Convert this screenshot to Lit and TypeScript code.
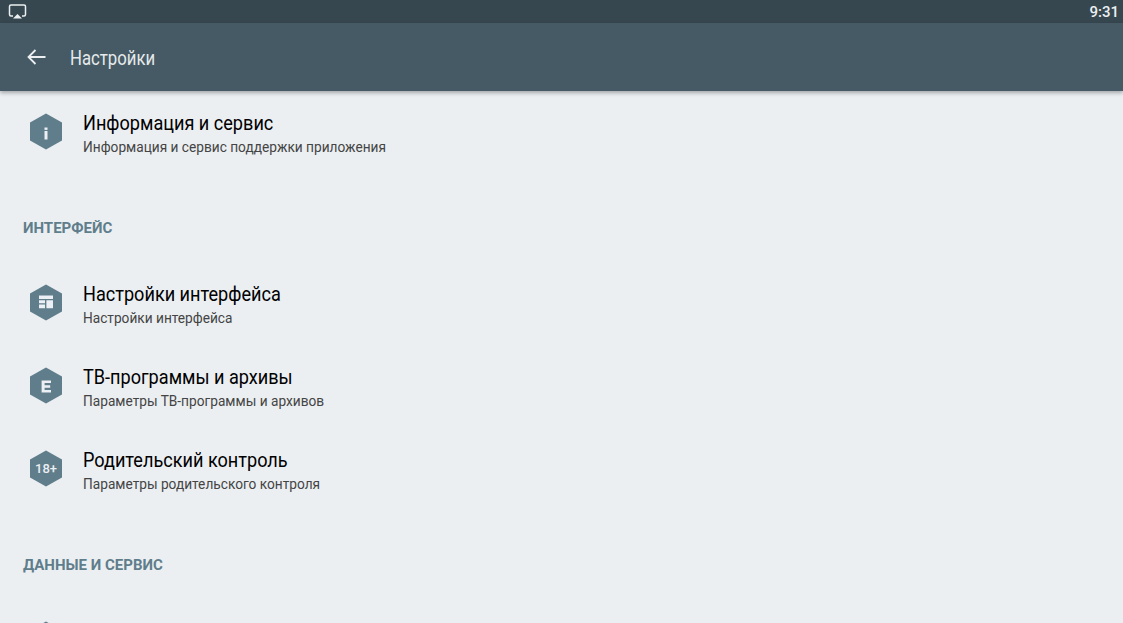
import { LitElement, html, css, svg } from "lit";
import { customElement } from "lit/decorators.js";

const HEX = "M18 0.5 L34 9.6 V27.4 L18 36.5 L2 27.4 V9.6 Z";

const glyphs: Record<string, unknown> = {
  info: svg`<rect x="16.5" y="14.5" width="3" height="2.4" fill="#eceff3"/><rect x="16.5" y="18" width="3" height="8.5" fill="#eceff3"/>`,
  layout: svg`<path d="M11 11.5h14v3.4H11zM11 16.2h6v3H11zM11 20.4h6v3.8H11zM18.4 16.2H25v8h-6.6z" fill="#eceff3"/>`,
  epg: svg`<path d="M13.6 13.5h9.4v2.6h-6.4v2.2h5.6v2.5h-5.6v2.2h6.4V25.5h-9.4z" fill="#eceff3"/>`,
  age: svg`<text x="18" y="23" text-anchor="middle" class="age">18+</text>`,
};

@customElement("app-root")
export class AppRoot extends LitElement {
  static styles = css`
    :host {
      display: block;
      height: 623px;
      overflow: hidden;
      background: #ebeff2;
      font-family: "Roboto", sans-serif;
    }
    .status {
      height: 23px;
      background: #37474f;
      display: flex;
      align-items: center;
      justify-content: space-between;
      padding: 0 4px 0 8px;
      color: #eceff1;
      font-size: 15px;
      font-weight: 500;
    }
    .status svg {
      display: block;
    }
    .toolbar {
      height: 68px;
      background: #455a64;
      display: flex;
      align-items: center;
      padding-left: 27px;
      gap: 24px;
      box-shadow: 0 2px 4px rgba(0, 0, 0, 0.3);
      position: relative;
    }
    .toolbar span {
      color: #e6eaec;
      font-size: 20px;
      display: inline-block;
      padding-top: 2px;
      transform: scaleX(0.837);
      transform-origin: left center;
    }
    .item {
      height: 83px;
      display: flex;
      padding-left: 28px;
      gap: 19px;
    }
    .item svg {
      flex: none;
      margin-top: 22px;
    }
    .age {
      font: 500 13px "Roboto", sans-serif;
      fill: #eceff3;
    }
    .text {
      padding-top: 19px;
      white-space: nowrap;
    }
    .title {
      font-size: 21px;
      line-height: 26px;
      color: #000;
      transform: scaleX(0.862);
      transform-origin: left top;
    }
    .sub {
      font-size: 15px;
      line-height: 18px;
      margin-top: 2px;
      color: #444;
      transform: scaleX(0.912);
      transform-origin: left top;
    }
    .section {
      padding: 44px 0 24px 23px;
      font-size: 15px;
      font-weight: 700;
      color: #607d8b;
      line-height: 20px;
    }
  `;

  private item(icon: string, title: string, sub: string) {
    return html`<div class="item">
      <svg width="36" height="37" viewBox="0 0 36 37">
        <path d=${HEX} fill="#607d8b"></path>${glyphs[icon]}
      </svg>
      <div class="text">
        <div class="title">${title}</div>
        <div class="sub">${sub}</div>
      </div>
    </div>`;
  }

  render() {
    return html`
      <div class="status">
        <svg width="19" height="15" viewBox="0 0 19 15">
          <path d="M5 12H3a1.5 1.5 0 0 1-1.5-1.5V2.5A1.5 1.5 0 0 1 3 1h13a1.5 1.5 0 0 1 1.5 1.5v8A1.5 1.5 0 0 1 16 12h-2" fill="none" stroke="#eceff1" stroke-width="1.5"></path>
          <path d="M5 14.5L9.5 10l4.5 4.5z" fill="#eceff1"></path>
        </svg>
        <span>9:31</span>
      </div>
      <div class="toolbar">
        <svg width="19" height="16" viewBox="0 0 19 16">
          <path d="M8.5 1L1.5 8l7 7M2 8h16.5" fill="none" stroke="#eceff1" stroke-width="1.8"></path>
        </svg>
        <span>Настройки</span>
      </div>
      <div class="list">
        ${this.item("info", "Информация и сервис", "Информация и сервис поддержки приложения")}
        <div class="section">ИНТЕРФЕЙС</div>
        ${this.item("layout", "Настройки интерфейса", "Настройки интерфейса")}
        ${this.item("epg", "ТВ-программы и архивы", "Параметры ТВ-программы и архивов")}
        ${this.item("age", "Родительский контроль", "Параметры родительского контроля")}
        <div class="section">ДАННЫЕ И СЕРВИС</div>
        ${this.item("info", "Очистка", "")}
      </div>
    `;
  }
}
